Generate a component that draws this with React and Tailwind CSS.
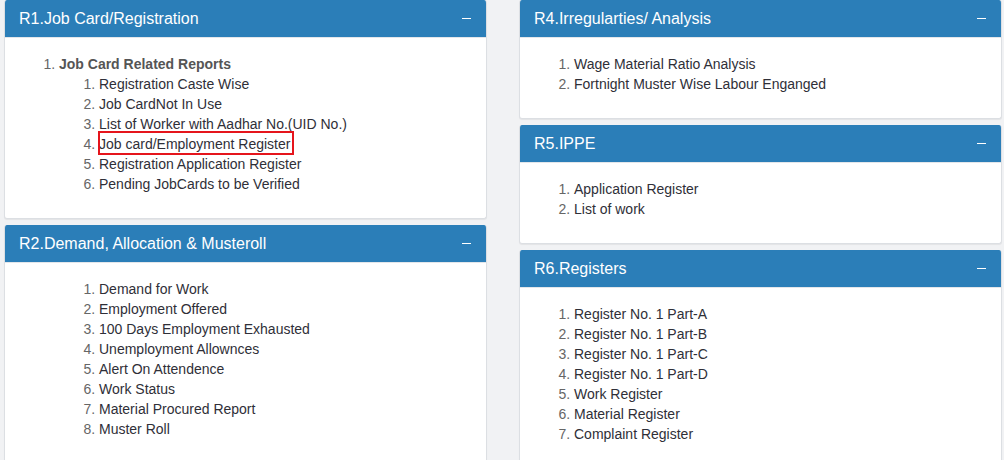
import React from "react";

const panels = {
  left: [
    {
      title: "R1.Job Card/Registration",
      group: "Job Card Related Reports",
      items: [
        "Registration Caste Wise",
        "Job CardNot In Use",
        "List of Worker with Aadhar No.(UID No.)",
        "Job card/Employment Register",
        "Registration Application Register",
        "Pending JobCards to be Verified",
      ],
      marked: 3,
    },
    {
      title: "R2.Demand, Allocation & Musteroll",
      nested: true,
      items: [
        "Demand for Work",
        "Employment Offered",
        "100 Days Employment Exhausted",
        "Unemployment Allownces",
        "Alert On Attendence",
        "Work Status",
        "Material Procured Report",
        "Muster Roll",
      ],
    },
  ],
  right: [
    {
      title: "R4.Irregularties/ Analysis",
      items: ["Wage Material Ratio Analysis", "Fortnight Muster Wise Labour Enganged"],
    },
    {
      title: "R5.IPPE",
      items: ["Application Register", "List of work"],
    },
    {
      title: "R6.Registers",
      items: [
        "Register No. 1 Part-A",
        "Register No. 1 Part-B",
        "Register No. 1 Part-C",
        "Register No. 1 Part-D",
        "Work Register",
        "Material Register",
        "Complaint Register",
      ],
    },
  ],
};

const ItemList = ({ items, marked }) => (
  <ol className="list-decimal pl-[40px] marker:text-[#666]">
    {items.map((item, i) => (
      <li key={item} className="text-[#2f2f38]">
        {i === marked ? (
          <span className="relative">
            <span className="absolute -left-[1px] -right-[4px] -top-[5px] -bottom-[3px] border-2 border-[#e5151c]"></span>
            {item}
          </span>
        ) : (
          item
        )}
      </li>
    ))}
  </ol>
);

const Panel = ({ panel }) => {
  return (
    <div className="mb-[6px] rounded-[3px] overflow-hidden border-x border-b border-[#dcdfe3] bg-white shadow-[0_1px_1px_rgba(0,0,0,0.06)]">
      {/* header */}
      <div className="flex items-center justify-between h-[38px] border-b border-[#e3e6ea] bg-[#2b7eb8] bg-clip-padding pl-[14px] pr-[15px] text-white">
        <span className="text-[16px]">{panel.title}</span>
        <span className="w-[9px] h-[1.5px] bg-white"></span>
      </div>
      <div className="pt-[16px] pb-[14px] px-[14px]">
        {panel.group ? (
          <ol className="list-decimal pl-[40px] mb-[10px] marker:text-[#666]">
            <li>
              <span className="font-bold text-[#555]">{panel.group}</span>
              <ItemList items={panel.items} marked={panel.marked} />
            </li>
          </ol>
        ) : panel.nested ? (
          <ol className="list-none pl-[40px] mb-[10px]">
            <li>
              <ItemList items={panel.items} />
            </li>
          </ol>
        ) : (
          <div className="mb-[10px]">
            <ItemList items={panel.items} />
          </div>
        )}
      </div>
    </div>
  );
};

export default function App() {
  return (
    <div
      className="h-[460px] overflow-hidden bg-[#f1f2f4] pl-[4px] pr-[2px] text-[14px] leading-[20px]"
      style={{ fontFamily: '"Liberation Sans", Arial, sans-serif' }}
    >
      <div className="grid grid-cols-[483px_483px] gap-x-[32px]">
        <div>
          {panels.left.map((p) => (
            <Panel key={p.title} panel={p} />
          ))}
        </div>
        <div>
          {panels.right.map((p) => (
            <Panel key={p.title} panel={p} />
          ))}
        </div>
      </div>
    </div>
  );
}
